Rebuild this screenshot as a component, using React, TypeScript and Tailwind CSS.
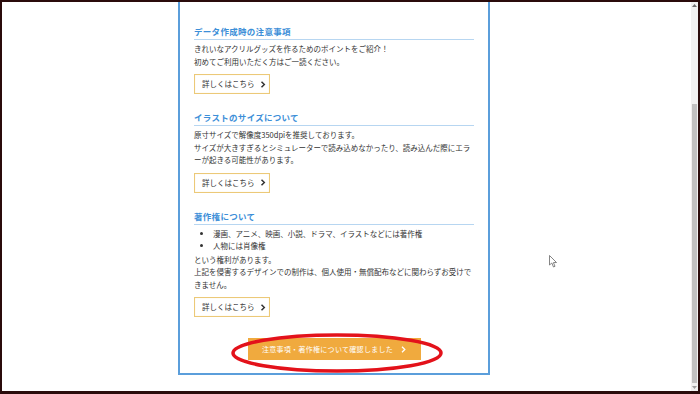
import React from "react";

const font = { fontFamily: '"Noto Sans CJK JP", "Noto Sans", sans-serif' };

const Heading = ({ children }: { children: React.ReactNode }) => (
  <div className="border-b border-[#b7d6f1] pb-[2px]">
    <h3 className="text-[8.5px] leading-[12px] font-bold text-[#3d8fd8] tracking-[0.3px]">
      {children}
    </h3>
  </div>
);

const MoreButton = () => (
  <button className="mt-[6px] flex h-[20px] w-[76px] items-center gap-[5px] border border-[#ecc978] bg-white pl-[7px] text-[7.5px] text-[#333] shadow-[inset_0_0_1px_#f3ddaa]">
    <span>詳しくはこちら</span>
    <svg width="6" height="7" viewBox="0 0 6 7">
      <path d="M1.5 0.8 L4.3 3.5 L1.5 6.2" fill="none" stroke="#333" strokeWidth="1.5" />
    </svg>
  </button>
);

export default function App() {
  return (
    <div
      className="relative flex h-[394px] w-[700px] overflow-hidden border-t-[2px] border-l-[2px] border-r-[2px] border-b-[3px] border-[#2a0b0b] bg-white"
      style={font}
    >
      <div className="flex-1">
        <div className="ml-[176px] w-[312px] border-x-[2px] border-b-[2px] border-[#5b9edb] px-[14px] pt-[23px] pb-[13px]">
          <section>
            <Heading>データ作成時の注意事項</Heading>
            <div className="mt-[3px] text-[7.5px] leading-[12.5px] text-[#333]">
              <p>きれいなアクリルグッズを作るためのポイントをご紹介！</p>
              <p>初めてご利用いただく方はご一読ください。</p>
            </div>
            <MoreButton />
          </section>

          <section className="mt-[17px]">
            <Heading>イラストのサイズについて</Heading>
            <div className="mt-[3px] text-[7.5px] leading-[12.5px] text-[#333]">
              <p>原寸サイズで解像度350dpiを推奨しております。</p>
              <p>
                サイズが大きすぎるとシミュレーターで読み込めなかったり、読み込んだ際にエラーが起きる可能性があります。
              </p>
            </div>
            <MoreButton />
          </section>

          <section className="mt-[17px]">
            <Heading>著作権について</Heading>
            <div className="mt-[3px] text-[7.5px] leading-[12.5px] text-[#333]">
              <ul className="mt-[3px] mb-[1px] list-disc pl-[19px]">
                <li>漫画、アニメ、映画、小説、ドラマ、イラストなどには著作権</li>
                <li>人物には肖像権</li>
              </ul>
              <p>という権利があります。</p>
              <p>
                上記を侵害するデザインでの制作は、個人使用・無償配布などに関わらずお受けできません。
              </p>
            </div>
            <MoreButton />
          </section>

          <div className="mt-[21px] flex justify-center">
            <button className="flex h-[22px] w-[173px] items-center justify-center gap-[8px] bg-[#f0aa3e] text-[7px] tracking-[0.3px] text-white">
              <span>注意事項・著作権について確認しました</span>
              <svg width="5" height="7" viewBox="0 0 5 7">
                <path d="M1 0.8 L3.8 3.5 L1 6.2" fill="none" stroke="#fff" strokeWidth="1.3" />
              </svg>
            </button>
          </div>
        </div>
      </div>

      {/* scrollbar */}
      <div className="flex w-[7px] flex-col bg-[#f1f1f1]">
        <div className="flex h-[8px] items-center justify-center">
          <svg width="5" height="3" viewBox="0 0 5 3">
            <path d="M0 3 L2.5 0 L5 3 Z" fill="#707070" />
          </svg>
        </div>
        <div className="mt-[94px] mx-auto h-[280px] w-[5px] bg-[#c1c1c1]" />
        <div className="mt-auto flex h-[8px] items-center justify-center">
          <svg width="5" height="3" viewBox="0 0 5 3">
            <path d="M0 0 L2.5 3 L5 0 Z" fill="#a0a0a0" />
          </svg>
        </div>
      </div>

      {/* red annotation ellipse */}
      <svg className="pointer-events-none absolute left-[228px] top-[330px]" width="214" height="42" viewBox="0 0 214 42">
        <ellipse cx="107" cy="21" rx="104" ry="18" fill="none" stroke="#e3121b" strokeWidth="3.5" />
      </svg>

      {/* mouse cursor */}
      <svg className="pointer-events-none absolute left-[547px] top-[253px]" width="9" height="13" viewBox="0 0 9 13">
        <path d="M0.5 0.5 L0.5 10 L2.8 8 L4.5 12 L6 11.3 L4.4 7.6 L7.5 7.5 Z" fill="#fff" stroke="#666" strokeWidth="0.8" />
      </svg>
    </div>
  );
}
